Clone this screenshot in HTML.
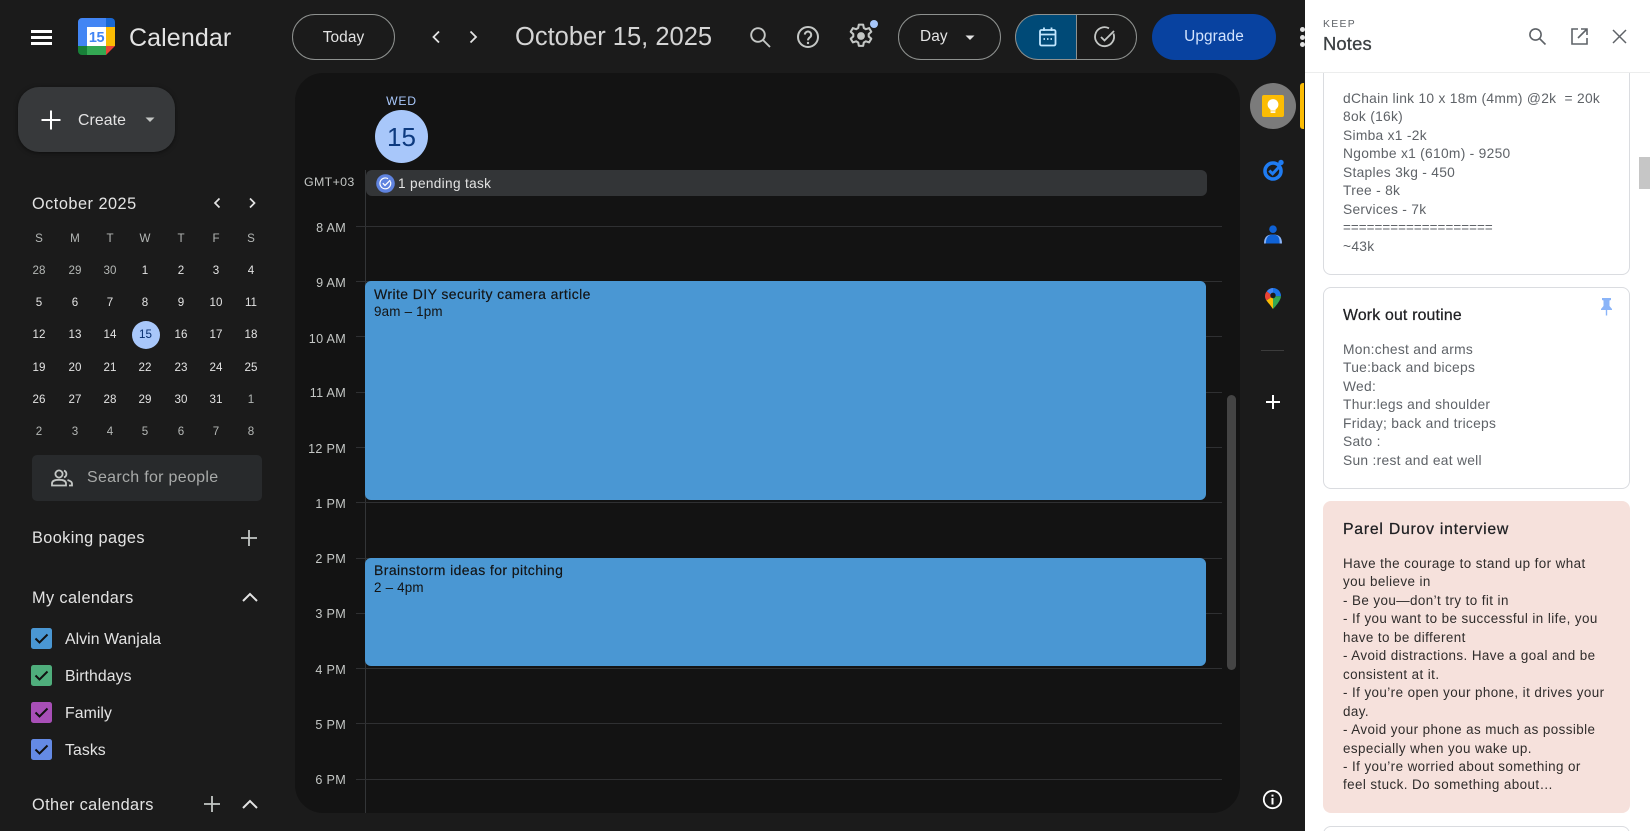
<!DOCTYPE html>
<html><head><meta charset="utf-8"><style>
html,body{margin:0;padding:0;width:1650px;height:831px;overflow:hidden;background:#1b1b1b;font-family:"Liberation Sans",sans-serif}
body{position:relative}
.a{position:absolute}
.t{position:absolute;white-space:pre;line-height:20px;color:#e3e3e3}
svg{position:absolute;overflow:visible}
.pill{position:absolute;box-sizing:border-box;border:1.5px solid #8e918f;border-radius:23px}
.line{position:absolute;left:356px;width:866px;height:1px;background:#2f3032}
.h{position:absolute;width:60px;left:286px;text-align:right;font-size:12.6px;line-height:20px;color:#c4c7c5;letter-spacing:.3px}
.m{position:absolute;width:36px;text-align:center;font-size:11.6px;line-height:16px;color:#e3e3e3;letter-spacing:0}
.d{color:#b4b7b5}
.cb{position:absolute;left:31px;width:21px;height:21px;border-radius:2.5px}
.cn{font-size:15.8px;left:65px;color:#e3e3e3;letter-spacing:.08px}
.n{position:absolute;left:1343px;font-size:13.8px;line-height:18.45px;color:#5f6368;white-space:pre;letter-spacing:.28px}
.nt{position:absolute;left:1343px;font-size:15.8px;line-height:20px;color:#202124;white-space:pre;letter-spacing:.2px;-webkit-text-stroke:.25px #202124}
.sec{font-size:16.3px;letter-spacing:.4px;left:32px}
.ev{font-size:14px;color:#131313;letter-spacing:.41px;-webkit-text-stroke:.15px #131313}
</style></head><body>

<!-- main grid panel -->
<div class="a" style="left:295px;top:73px;width:945px;height:740px;background:#131313;border-radius:28px"></div>

<!-- top bar -->
<div class="a" style="left:31px;top:30px;width:21px;height:3px;background:#fff"></div>
<div class="a" style="left:31px;top:36px;width:21px;height:3px;background:#fff"></div>
<div class="a" style="left:31px;top:42px;width:21px;height:3px;background:#fff"></div>

<svg style="left:78px;top:18px" width="37" height="37" viewBox="0 0 37 37">
<path d="M4 0H28V9H9V28H0V4A4 4 0 0 1 4 0Z" fill="#4285f4"/>
<path d="M28 0H33A4 4 0 0 1 37 4V9H28Z" fill="#1967d2"/>
<path d="M28 9H37V28H28Z" fill="#fbbc04"/>
<path d="M9 28H28V37H9Z" fill="#34a853"/>
<path d="M0 28H9V37H4A4 4 0 0 1 0 33Z" fill="#188038"/>
<path d="M28 28H37L28 37Z" fill="#ea4335"/>
<rect x="9" y="9" width="19" height="19" fill="#fff"/>
<text x="18.5" y="24" font-family="Liberation Sans" font-size="14.5" font-weight="700" fill="#4285f4" text-anchor="middle" style="letter-spacing:-.4px">15</text>
</svg>
<div class="t" style="left:129px;top:26px;line-height:24px;font-size:25px;color:#e3e3e3;letter-spacing:.1px">Calendar</div>

<div class="pill" style="left:292px;top:14px;width:103px;height:46px"></div>
<div class="t" style="left:292px;width:103px;text-align:center;top:28px;font-size:15.4px;letter-spacing:.1px">Today</div>

<svg style="left:426px;top:27px" width="20" height="20" fill="none" stroke="#e3e3e3" stroke-width="1.8"><path d="M13 4.5L7.5 10L13 15.5"/></svg>
<svg style="left:463px;top:27px" width="20" height="20" fill="none" stroke="#e3e3e3" stroke-width="1.8"><path d="M7.5 4.5L13 10L7.5 15.5"/></svg>
<div class="t" style="left:515px;top:24px;line-height:26px;font-size:25.5px;color:#d4d4d4">October 15, 2025</div>

<svg style="left:748px;top:25px" width="24" height="24" fill="none" stroke="#c4c7c5" stroke-width="1.9"><circle cx="10" cy="10" r="6.8"/><path d="M15 15L22 22"/></svg>
<svg style="left:796px;top:25px" width="24" height="24" fill="none" stroke="#c4c7c5" stroke-width="2"><circle cx="12" cy="12" r="10"/><path d="M8.8 9.6A3.2 3.2 0 1 1 13.8 12.4C12.6 13.2 12 13.8 12 15.4"/><circle cx="12" cy="18" r="1.2" fill="#c4c7c5" stroke="none"/></svg>
<svg style="left:848px;top:23px" width="26" height="26" viewBox="0 0 24 24" fill="none" stroke="#c4c7c5" stroke-width="1.9"><path d="M10 1.5h4l.6 3.1 1.9 1.1 3-1 2 3.4-2.4 2.1v2.2l2.4 2.1-2 3.4-3-1-1.9 1.1-.6 3.1h-4l-.6-3.1-1.9-1.1-3 1-2-3.4 2.4-2.1v-2.2L2.5 8.1l2-3.4 3 1 1.9-1.1z" stroke-linejoin="round"/><circle cx="12" cy="12" r="3.6" fill="#c4c7c5" stroke="none"/></svg>
<div class="a" style="left:870px;top:20px;width:8px;height:8px;border-radius:50%;background:#a8c7fa"></div>

<div class="pill" style="left:898px;top:14px;width:103px;height:46px"></div>
<div class="t" style="left:920px;top:27px;font-size:15.4px;letter-spacing:.1px">Day</div>
<svg style="left:964.5px;top:35px" width="10" height="6"><path d="M.5 .5H9.5L5 5Z" fill="#e3e3e3"/></svg>

<div class="a" style="left:1015px;top:14px;width:61px;height:46px;box-sizing:border-box;background:#004a77;border:1.5px solid #8e918f;border-right:0;border-radius:23px 0 0 23px"></div>
<div class="a" style="left:1076px;top:14px;width:61px;height:46px;box-sizing:border-box;border:1.5px solid #8e918f;border-radius:0 23px 23px 0"></div>
<svg style="left:1038px;top:26px" width="20" height="22" fill="none" stroke="#c2e7ff" stroke-width="1.8"><rect x="2" y="4" width="15.5" height="15.5" rx="1.5"/><path d="M2 8.5H17.5M6 1.5V5M13.5 1.5V5"/><path d="M5.5 13H7M9 13H10.5M12.5 13H14" stroke-width="1.8"/></svg>
<svg style="left:1093px;top:25px" width="24" height="24" fill="none" stroke="#c4c7c5" stroke-width="1.8"><path d="M20.5 8.5A9.5 9.5 0 1 1 16 3.3"/><path d="M8 12L11.5 15.5L21 6"/></svg>

<div class="a" style="left:1152px;top:14px;width:124px;height:46px;border-radius:23px;background:#0842a0"></div>
<div class="t" style="left:1152px;width:124px;text-align:center;top:27px;font-size:15.4px;color:#d3e3fd;letter-spacing:.1px">Upgrade</div>

<div class="a" style="left:1300px;top:27px;width:5px;height:5px;border-radius:50%;background:#e3e3e3"></div>
<div class="a" style="left:1300px;top:35px;width:5px;height:5px;border-radius:50%;background:#e3e3e3"></div>
<div class="a" style="left:1300px;top:42px;width:5px;height:5px;border-radius:50%;background:#e3e3e3"></div>

<!-- create -->
<div class="a" style="left:18px;top:87px;width:157px;height:65px;border-radius:21px;background:#37393b;box-shadow:0 1px 4px rgba(0,0,0,.5)"></div>
<svg style="left:40px;top:109px" width="22" height="22" stroke="#fff" stroke-width="2"><path d="M11 1.5V20.5M1.5 11H20.5"/></svg>
<div class="t" style="left:78px;top:111px;font-size:15.8px;color:#e3e3e3;letter-spacing:.1px">Create</div>
<svg style="left:145px;top:117px" width="10" height="6"><path d="M.5 .5H9.5L5 5Z" fill="#c4c7c5"/></svg>

<!-- mini calendar -->
<div class="t" style="left:32px;top:194px;font-size:16.3px;color:#e3e3e3;letter-spacing:.5px">October 2025</div>
<svg style="left:207px;top:193px" width="20" height="20" fill="none" stroke="#e3e3e3" stroke-width="1.7"><path d="M12.5 5.5L8 10L12.5 14.5"/></svg>
<svg style="left:242px;top:193px" width="20" height="20" fill="none" stroke="#e3e3e3" stroke-width="1.7"><path d="M8 5.5L12.5 10L8 14.5"/></svg>

<div class="m d" style="left:21px;top:231px">S</div><div class="m d" style="left:57px;top:231px">M</div><div class="m d" style="left:92px;top:231px">T</div><div class="m d" style="left:127px;top:231px">W</div><div class="m d" style="left:163px;top:231px">T</div><div class="m d" style="left:198px;top:231px">F</div><div class="m d" style="left:233px;top:231px">S</div>

<div class="m d" style="left:21px;top:263px">28</div><div class="m d" style="left:57px;top:263px">29</div><div class="m d" style="left:92px;top:263px">30</div><div class="m" style="left:127px;top:263px">1</div><div class="m" style="left:163px;top:263px">2</div><div class="m" style="left:198px;top:263px">3</div><div class="m" style="left:233px;top:263px">4</div>
<div class="m" style="left:21px;top:295px">5</div><div class="m" style="left:57px;top:295px">6</div><div class="m" style="left:92px;top:295px">7</div><div class="m" style="left:127px;top:295px">8</div><div class="m" style="left:163px;top:295px">9</div><div class="m" style="left:198px;top:295px">10</div><div class="m" style="left:233px;top:295px">11</div>
<div class="a" style="left:131.5px;top:321px;width:28px;height:28px;border-radius:50%;background:#a8c7fa"></div>
<div class="m" style="left:21px;top:327px">12</div><div class="m" style="left:57px;top:327px">13</div><div class="m" style="left:92px;top:327px">14</div><div class="m" style="left:127.5px;top:327px;color:#062e6f">15</div><div class="m" style="left:163px;top:327px">16</div><div class="m" style="left:198px;top:327px">17</div><div class="m" style="left:233px;top:327px">18</div>
<div class="m" style="left:21px;top:360px">19</div><div class="m" style="left:57px;top:360px">20</div><div class="m" style="left:92px;top:360px">21</div><div class="m" style="left:127px;top:360px">22</div><div class="m" style="left:163px;top:360px">23</div><div class="m" style="left:198px;top:360px">24</div><div class="m" style="left:233px;top:360px">25</div>
<div class="m" style="left:21px;top:392px">26</div><div class="m" style="left:57px;top:392px">27</div><div class="m" style="left:92px;top:392px">28</div><div class="m" style="left:127px;top:392px">29</div><div class="m" style="left:163px;top:392px">30</div><div class="m" style="left:198px;top:392px">31</div><div class="m d" style="left:233px;top:392px">1</div>
<div class="m d" style="left:21px;top:424px">2</div><div class="m d" style="left:57px;top:424px">3</div><div class="m d" style="left:92px;top:424px">4</div><div class="m d" style="left:127px;top:424px">5</div><div class="m d" style="left:163px;top:424px">6</div><div class="m d" style="left:198px;top:424px">7</div><div class="m d" style="left:233px;top:424px">8</div>

<!-- search people -->
<div class="a" style="left:32px;top:455px;width:230px;height:46px;border-radius:5px;background:#282a2c"></div>
<svg style="left:51px;top:469px" width="22" height="18" fill="none" stroke="#c4c7c5" stroke-width="1.8"><circle cx="8" cy="5" r="3.6"/><path d="M1 16.5V14.5C1 11.5 5 10.8 8 10.8S15 11.5 15 14.5V16.5Z"/><path d="M13 1.6A3.6 3.6 0 0 1 13 8.4M16.5 11C19 11.7 21 12.8 21 14.5V16.5H18"/></svg>
<div class="t" style="left:87px;top:468px;font-size:16px;color:#a8aaa9;letter-spacing:.3px">Search for people</div>

<div class="t sec" style="top:528px">Booking pages</div>
<svg style="left:239px;top:528px" width="20" height="20" stroke="#c4c7c5" stroke-width="1.8"><path d="M10 2V18M2 10H18"/></svg>

<div class="t sec" style="top:588px">My calendars</div>
<svg style="left:241px;top:590px" width="18" height="14" fill="none" stroke="#e3e3e3" stroke-width="2"><path d="M2 11L9 4L16 11"/></svg>

<div class="cb" style="top:628px;background:#4a97d3"></div>
<div class="cb" style="top:665px;background:#4fae7c"></div>
<div class="cb" style="top:702px;background:#a84fb7"></div>
<div class="cb" style="top:739px;background:#648ae5"></div>
<svg style="left:31px;top:628px" width="21" height="21" fill="none" stroke="#111" stroke-width="2"><path d="M4.5 10.5L8.5 14.5L16.5 6.5"/></svg>
<svg style="left:31px;top:665px" width="21" height="21" fill="none" stroke="#111" stroke-width="2"><path d="M4.5 10.5L8.5 14.5L16.5 6.5"/></svg>
<svg style="left:31px;top:702px" width="21" height="21" fill="none" stroke="#111" stroke-width="2"><path d="M4.5 10.5L8.5 14.5L16.5 6.5"/></svg>
<svg style="left:31px;top:739px" width="21" height="21" fill="none" stroke="#111" stroke-width="2"><path d="M4.5 10.5L8.5 14.5L16.5 6.5"/></svg>
<div class="t cn" style="top:630px">Alvin Wanjala</div>
<div class="t cn" style="top:667px">Birthdays</div>
<div class="t cn" style="top:704px">Family</div>
<div class="t cn" style="top:741px">Tasks</div>

<div class="t sec" style="top:795px">Other calendars</div>
<svg style="left:202px;top:794px" width="20" height="20" stroke="#c4c7c5" stroke-width="1.8"><path d="M10 2V18M2 10H18"/></svg>
<svg style="left:241px;top:797px" width="18" height="14" fill="none" stroke="#e3e3e3" stroke-width="2"><path d="M2 11L9 4L16 11"/></svg>

<!-- day header -->
<div class="t" style="left:361.5px;width:80px;text-align:center;top:91px;font-size:12.2px;color:#a8c7fa;letter-spacing:.8px">WED</div>
<div class="a" style="left:375px;top:110px;width:53px;height:53px;border-radius:50%;background:#a8c7fa"></div>
<div class="t" style="left:375px;width:53px;text-align:center;top:122px;line-height:30px;font-size:26px;color:#0d3a7f">15</div>

<div class="t" style="left:304px;top:172px;font-size:12.4px;color:#c4c7c5;letter-spacing:.35px">GMT+03</div>
<div class="a" style="left:365px;top:170px;width:1px;height:643px;background:#333537"></div>
<div class="a" style="left:366px;top:170px;width:841px;height:26px;border-radius:6px;background:#333537"></div>
<svg style="left:375.5px;top:173.5px" width="19" height="19" fill="none"><circle cx="9.5" cy="9.5" r="9.3" fill="#5f83df"/><path d="M14.3 7.3A5.4 5.4 0 1 1 12 4.7" stroke="#fff" stroke-width="1.2"/><path d="M6.8 9.2L9 11.4L14.2 6.2" stroke="#fff" stroke-width="1.3"/></svg>
<div class="t" style="left:398px;top:174px;font-size:13.6px;color:#e3e3e3;letter-spacing:.35px">1 pending task</div>

<!-- hours -->
<div class="line" style="top:226px"></div><div class="h" style="top:218px">8 AM</div>
<div class="line" style="top:281px"></div><div class="h" style="top:273px">9 AM</div>
<div class="line" style="top:336px"></div><div class="h" style="top:329px">10 AM</div>
<div class="line" style="top:392px"></div><div class="h" style="top:383px">11 AM</div>
<div class="line" style="top:447px"></div><div class="h" style="top:439px">12 PM</div>
<div class="line" style="top:502px"></div><div class="h" style="top:494px">1 PM</div>
<div class="line" style="top:558px"></div><div class="h" style="top:549px">2 PM</div>
<div class="line" style="top:613px"></div><div class="h" style="top:604px">3 PM</div>
<div class="line" style="top:668px"></div><div class="h" style="top:660px">4 PM</div>
<div class="line" style="top:723px"></div><div class="h" style="top:715px">5 PM</div>
<div class="line" style="top:779px"></div><div class="h" style="top:770px">6 PM</div>

<!-- events -->
<div class="a" style="left:365px;top:281px;width:841px;height:219px;border-radius:6px;background:#4a97d3"></div>
<div class="t ev" style="left:374px;top:284px">Write DIY security camera article</div>
<div class="t" style="left:374px;top:302px;font-size:13.4px;color:#131313;letter-spacing:.2px">9am – 1pm</div>
<div class="a" style="left:365px;top:557.5px;width:841px;height:108px;border-radius:6px;background:#4a97d3"></div>
<div class="t ev" style="left:374px;top:560px">Brainstorm ideas for pitching</div>
<div class="t" style="left:374px;top:578px;font-size:13.4px;color:#131313;letter-spacing:.2px">2 – 4pm</div>

<div class="a" style="left:1227px;top:395px;width:9px;height:275px;border-radius:5px;background:#444"></div>

<!-- rail -->
<div class="a" style="left:1250px;top:83px;width:46px;height:46px;border-radius:50%;background:#7b7b7b"></div>
<div class="a" style="left:1300px;top:83px;width:4px;height:46px;border-radius:3px 0 0 3px;background:#fbbc04"></div>
<svg style="left:1262px;top:95px" width="22" height="22"><rect width="22" height="22" rx="2" fill="#fbbc04"/><circle cx="11" cy="9.5" r="5.4" fill="#fff"/><rect x="8.4" y="13" width="5.2" height="2.6" fill="#fff"/><rect x="8.6" y="16.3" width="4.8" height="1.6" fill="#fff"/></svg>
<svg style="left:1263px;top:159px" width="22" height="22" fill="none"><circle cx="10" cy="12" r="8" stroke="#1f7cf2" stroke-width="3.6"/><path d="M6.3 11.6L9.6 14.8L16 8" stroke="#1f7cf2" stroke-width="3"/><circle cx="18" cy="3.5" r="2.7" fill="#1f7cf2"/></svg>
<svg style="left:1264px;top:225px" width="18" height="20"><circle cx="9" cy="4.2" r="3.8" fill="#0f62d6"/><path d="M0 18.5C0 12 3 9.5 9 9.5S18 12 18 18.5Z" fill="#8ab4f8"/><path d="M1.8 18.5C2 12 4.5 9.5 9 9.5S16 12 15.6 18.5Z" fill="#0f62d6"/></svg>
<svg style="left:1265px;top:288px" width="16" height="21" viewBox="0 0 18 22" preserveAspectRatio="none"><path d="M9 22C9 22 18 13.5 18 8.5L9 8.5Z" fill="#34a853"/><path d="M9 22C7 19 3 15 1.5 13L9 8.5Z" fill="#fbbc04"/><path d="M1.5 13C.5 11.5 0 10 0 8.5C0 6.5 .7 4.8 2 3.5L9 8.5Z" fill="#ea4335"/><path d="M2 3.5C3.7 1.3 6.3 0 9 0L9 8.5Z" fill="#4285f4"/><path d="M9 0C13.9 0 18 3.6 18 8.5L9 8.5Z" fill="#1a73e8"/><circle cx="9" cy="7.8" r="3" fill="#1b1b1b"/></svg>
<div class="a" style="left:1261px;top:350px;width:23px;height:1px;background:#3c3c3c"></div>
<svg style="left:1263px;top:392px" width="20" height="20" stroke="#fff" stroke-width="2"><path d="M10 3V17M3 10H17"/></svg>
<svg style="left:1262px;top:789px" width="21" height="21" fill="none"><circle cx="10.5" cy="10.5" r="8.7" stroke="#fff" stroke-width="1.8"/><rect x="9.5" y="9" width="2" height="6.5" fill="#fff"/><rect x="9.5" y="5.6" width="2" height="2" fill="#fff"/></svg>

<!-- notes panel -->
<div class="a" style="left:1305px;top:0;width:345px;height:831px;background:#fff"></div>
<div class="a" style="left:1639px;top:157px;width:11px;height:32px;background:#c6c6c6"></div>

<div class="a" style="left:1323px;top:60px;width:307px;height:215px;box-sizing:border-box;border:1.3px solid #dadce0;border-radius:8px"></div>
<div class="a" style="left:1305px;top:0;width:345px;height:73px;background:#fff;border-bottom:1px solid #eceded;box-sizing:border-box"></div>
<div class="t" style="left:1323px;top:15px;font-size:10.4px;color:#5f6368;letter-spacing:1.3px">KEEP</div>
<div class="t" style="left:1323px;top:34px;font-size:18.4px;color:#3c4043;letter-spacing:.15px;-webkit-text-stroke:.3px #3c4043">Notes</div>
<svg style="left:1528px;top:27px" width="19" height="19" fill="none" stroke="#5f6368" stroke-width="1.6"><circle cx="7.5" cy="7.5" r="5.6"/><path d="M11.5 11.5L17.5 17.5"/></svg>
<svg style="left:1571px;top:28px" width="17" height="17" fill="none" stroke="#5f6368" stroke-width="1.6"><path d="M7 1H1V16H16V10M10 1H16V7M16 1L7 10"/></svg>
<svg style="left:1612px;top:29px" width="15" height="15" fill="none" stroke="#5f6368" stroke-width="1.5"><path d="M1 1L14 14M14 1L1 14"/></svg>

<div class="n" style="top:90px">dChain link 10 x 18m (4mm) @2k  = 20k
8ok (16k)
Simba x1 -2k
Ngombe x1 (610m) - 9250
Staples 3kg - 450
Tree - 8k
Services - 7k
<span style="font-size:13.4px;letter-spacing:.06px">===================</span>
~43k</div>

<div class="a" style="left:1323px;top:287px;width:307px;height:202px;box-sizing:border-box;border:1.3px solid #dadce0;border-radius:8px"></div>
<div class="nt" style="top:306px">Work out routine</div>
<svg style="left:1600px;top:298px" width="13" height="18"><path d="M2 0H11V2L9.5 2.5V8L12 11V12H7.2V17.5H5.8V12H1V11L3.5 8V2.5L2 2Z" fill="#8ab4f8"/></svg>
<div class="n" style="top:341px">Mon:chest and arms
Tue:back and biceps
Wed:
Thur:legs and shoulder
Friday; back and triceps
Sato :
Sun :rest and eat well</div>

<div class="a" style="left:1323px;top:501px;width:307px;height:312px;background:#f6e1dc;border-radius:8px"></div>
<div class="nt" style="top:520px;letter-spacing:.76px">Parel Durov interview</div>
<div class="n" style="top:555px;font-size:13.4px;color:#2f2c2b;letter-spacing:.42px">Have the courage to stand up for what
you believe in
- Be you—don’t try to fit in
- If you want to be successful in life, you
have to be different
- Avoid distractions. Have a goal and be
consistent at it.
- If you’re open your phone, it drives your
day.
- Avoid your phone as much as possible
especially when you wake up.
- If you’re worried about something or
feel stuck. Do something about…</div>

<div class="a" style="left:1323px;top:825.5px;width:307px;height:30px;box-sizing:border-box;border:1.3px solid #dadce0;border-radius:8px"></div>
</body></html>
